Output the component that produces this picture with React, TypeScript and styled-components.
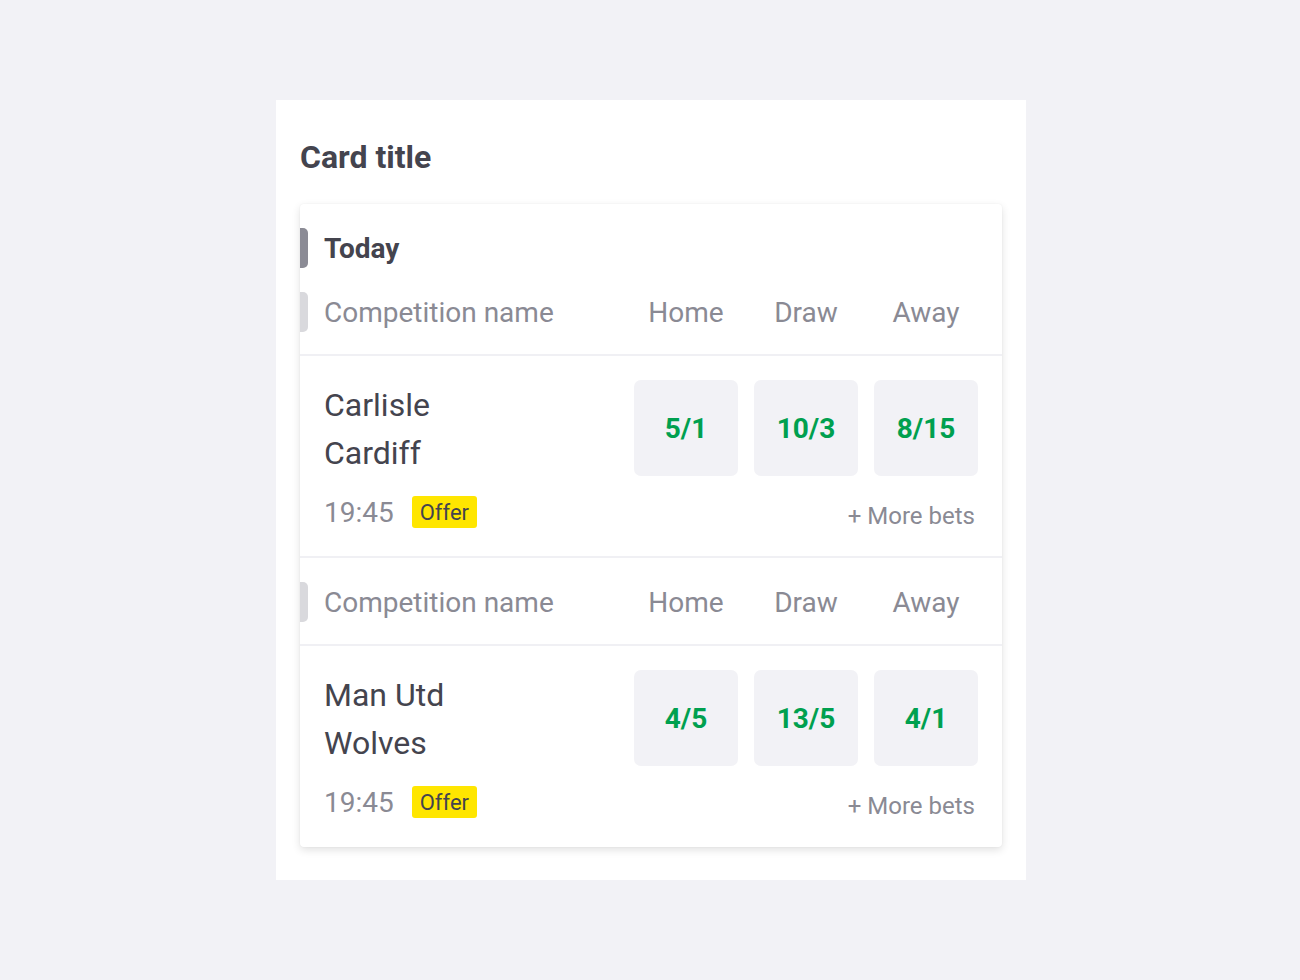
import React from "react";
import styled, { createGlobalStyle } from "styled-components";

const Global = createGlobalStyle`
  html, body { margin: 0; padding: 0; background: #f2f2f6; }
  body { font-family: Roboto, "Liberation Sans", Arial, sans-serif; -webkit-font-smoothing: antialiased; }
`;

const Page = styled.div`
  display: flex;
  padding: 100px 0 100px 276px;
  min-height: 980px;
  box-sizing: border-box;
`;

const Outer = styled.section`
  width: 750px;
  height: 780px;
  box-sizing: border-box;
  background: #ffffff;
  padding: 39px 24px 33px;
`;

const Title = styled.h2`
  margin: 0 0 29px;
  font-size: 32px;
  line-height: 36px;
  font-weight: 700;
  color: #44444e;
`;

const Inner = styled.div`
  background: #ffffff;
  border-radius: 4px;
  box-shadow: 0 3px 8px rgba(0, 0, 0, 0.12), 0 0 2px rgba(0, 0, 0, 0.05);
  padding-top: 24px;
  overflow: hidden;
`;

const Marker = styled.span<{ $tone: "dark" | "light" }>`
  flex: none;
  width: 8px;
  height: 40px;
  border-radius: 0 5px 5px 0;
  background: ${(p) => (p.$tone === "dark" ? "#8b8b95" : "#d9d9dd")};
  margin-right: 16px;
`;

const DayRow = styled.div`
  display: flex;
  align-items: center;
  height: 40px;
`;

const DayLabel = styled.span`
  font-size: 28px;
  font-weight: 700;
  color: #44444e;
`;

const HeaderRow = styled.div`
  display: flex;
  align-items: center;
  padding: 24px 24px 22px 0;
  border-bottom: 2px solid #f0f0f4;
`;

const Competition = styled.span`
  flex: 1;
  font-size: 28px;
  color: #8a8a94;
`;

const ColHead = styled.span`
  width: 104px;
  text-align: center;
  font-size: 28px;
  color: #8a8a94;
  & + & { margin-left: 16px; }
`;

const MatchRow = styled.div<{ $last?: boolean }>`
  display: grid;
  grid-template-columns: 1fr auto;
  grid-template-rows: 96px 32px;
  row-gap: 20px;
  padding: 24px 24px ${(p) => (p.$last ? "29px" : "28px")} 24px;
  border-bottom: ${(p) => (p.$last ? "none" : "2px solid #f0f0f4")};
`;

const Teams = styled.div`
  display: flex;
  flex-direction: column;
  font-size: 32px;
  line-height: 48px;
  color: #44444e;
  padding-top: 1px;
`;

const Odds = styled.div`
  display: flex;
  gap: 16px;
`;

const OddButton = styled.button`
  width: 104px;
  height: 96px;
  border: none;
  border-radius: 7px;
  background: #f2f2f6;
  color: #00a04f;
  font-family: inherit;
  font-size: 28px;
  font-weight: 700;
  padding: 0;
  cursor: pointer;
`;

const Meta = styled.div`
  display: flex;
  align-items: center;
  gap: 18px;
`;

const Time = styled.span`
  font-size: 28px;
  color: #8a8a94;
`;

const Offer = styled.span`
  display: inline-flex;
  align-items: center;
  height: 32px;
  padding: 0 8px;
  border-radius: 3px;
  background: #ffe600;
  color: #44444e;
  font-size: 22px;
`;

const MoreBets = styled.a`
  align-self: center;
  justify-self: end;
  margin-right: 3px;
  padding-top: 7px;
  font-size: 24px;
  color: #8a8a94;
  text-decoration: none;
`;

type Match = { home: string; away: string; time: string; odds: [string, string, string] };

const matches: Match[] = [
  { home: "Carlisle", away: "Cardiff", time: "19:45", odds: ["5/1", "10/3", "8/15"] },
  { home: "Man Utd", away: "Wolves", time: "19:45", odds: ["4/5", "13/5", "4/1"] },
];

export default function App() {
  return (
    <>
      <Global />
      <Page>
        <Outer>
          <Title>Card title</Title>
          <Inner>
            <DayRow>
              <Marker $tone="dark" />
              <DayLabel>Today</DayLabel>
            </DayRow>
            {matches.map((m, i) => (
              <React.Fragment key={i}>
                <HeaderRow>
                  <Marker $tone="light" />
                  <Competition>Competition name</Competition>
                  <ColHead>Home</ColHead>
                  <ColHead>Draw</ColHead>
                  <ColHead>Away</ColHead>
                </HeaderRow>
                <MatchRow $last={i === matches.length - 1}>
                  <Teams>
                    <span>{m.home}</span>
                    <span>{m.away}</span>
                  </Teams>
                  <Odds>
                    {m.odds.map((o) => (
                      <OddButton key={o}>{o}</OddButton>
                    ))}
                  </Odds>
                  <Meta>
                    <Time>{m.time}</Time>
                    <Offer>Offer</Offer>
                  </Meta>
                  <MoreBets href="#">+ More bets</MoreBets>
                </MatchRow>
              </React.Fragment>
            ))}
          </Inner>
        </Outer>
      </Page>
    </>
  );
}
